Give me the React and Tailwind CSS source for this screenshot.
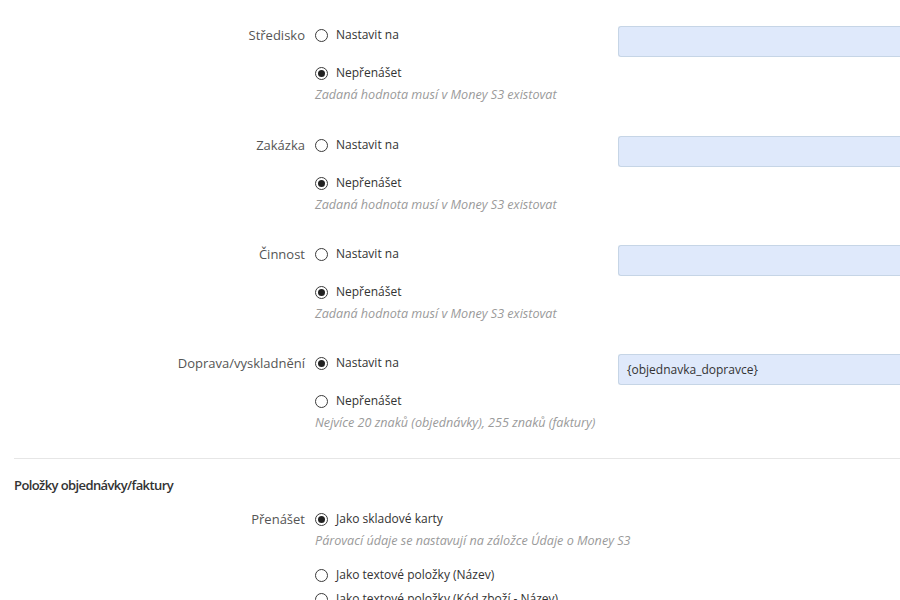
const font = { fontFamily: '"Open Sans", "Noto Sans", sans-serif' };

function Radio({ checked, label }) {
  return (
    <div className="flex items-center h-[20px]">
      <span className="w-[13px] h-[13px] rounded-full border border-[#3a3a3a] bg-white flex items-center justify-center">
        {checked && <span className="w-[7px] h-[7px] rounded-full bg-[#222]" />}
      </span>
      <span className="ml-[8px] text-[12px] text-[#333]">{label}</span>
    </div>
  );
}

function Hint({ children }) {
  return <div className="h-[18px] leading-[18px] text-[12.6px] italic text-[#9a9a9a]">{children}</div>;
}

function Group({ label, value, setOn, hint, gap }) {
  return (
    <div className={`flex items-start ${gap}`}>
      <div className="w-[305px] h-[20px] leading-[20px] text-right text-[13px] text-[#555]">{label}</div>
      <div className="w-[313px] pl-[10px]">
        <div className="h-[32px]">
          <Radio checked={setOn} label="Nastavit na" />
        </div>
        <div className="mt-[6px]">
          <Radio checked={!setOn} label="Nepřenášet" />
        </div>
        <div className="mt-[3px]">
          <Hint>{hint}</Hint>
        </div>
      </div>
      <div className="flex-1 pt-[1px]">
        <div className="h-[31px] bg-[#dfe9fb] border border-[#c6d5e6] border-r-0 rounded-l-[3px] px-[8px] flex items-center text-[12px] text-[#333]">
          {value}
        </div>
      </div>
    </div>
  );
}

export default function App() {
  const hint = "Zadaná hodnota musí v Money S3 existovat";
  return (
    <div className="w-[900px] h-[600px] overflow-hidden bg-white" style={font}>
      <div className="pt-[25px]">
        <Group label="Středisko" hint={hint} gap="pb-[31px]" />
        <Group label="Zakázka" hint={hint} gap="pb-[30px]" />
        <Group label="Činnost" hint={hint} gap="pb-[30px]" />
        <Group
          label="Doprava/vyskladnění"
          setOn
          value="{objednavka_dopravce}"
          hint="Nejvíce 20 znaků (objednávky), 255 znaků (faktury)"
          gap="pb-0"
        />
      </div>
      <div className="ml-[14px] border-t border-[#e6e6e6] mt-[26px]" />
      <div className="ml-[14px] mt-[16px] h-[20px] leading-[20px] text-[13px] font-semibold text-[#333] tracking-[-0.6px]">
        Položky objednávky/faktury
      </div>
      <div className="flex items-start mt-[14px]">
        <div className="w-[305px] h-[20px] leading-[20px] text-right text-[13px] text-[#555]">Přenášet</div>
        <div className="pl-[10px]">
          <Radio checked label="Jako skladové karty" />
          <div className="mt-[3px]">
            <Hint>Párovací údaje se nastavují na záložce Údaje o Money S3</Hint>
          </div>
          <div className="mt-[15px]">
            <Radio label="Jako textové položky (Název)" />
          </div>
          <div className="mt-[4px]">
            <Radio label="Jako textové položky (Kód zboží - Název)" />
          </div>
        </div>
      </div>
    </div>
  );
}
